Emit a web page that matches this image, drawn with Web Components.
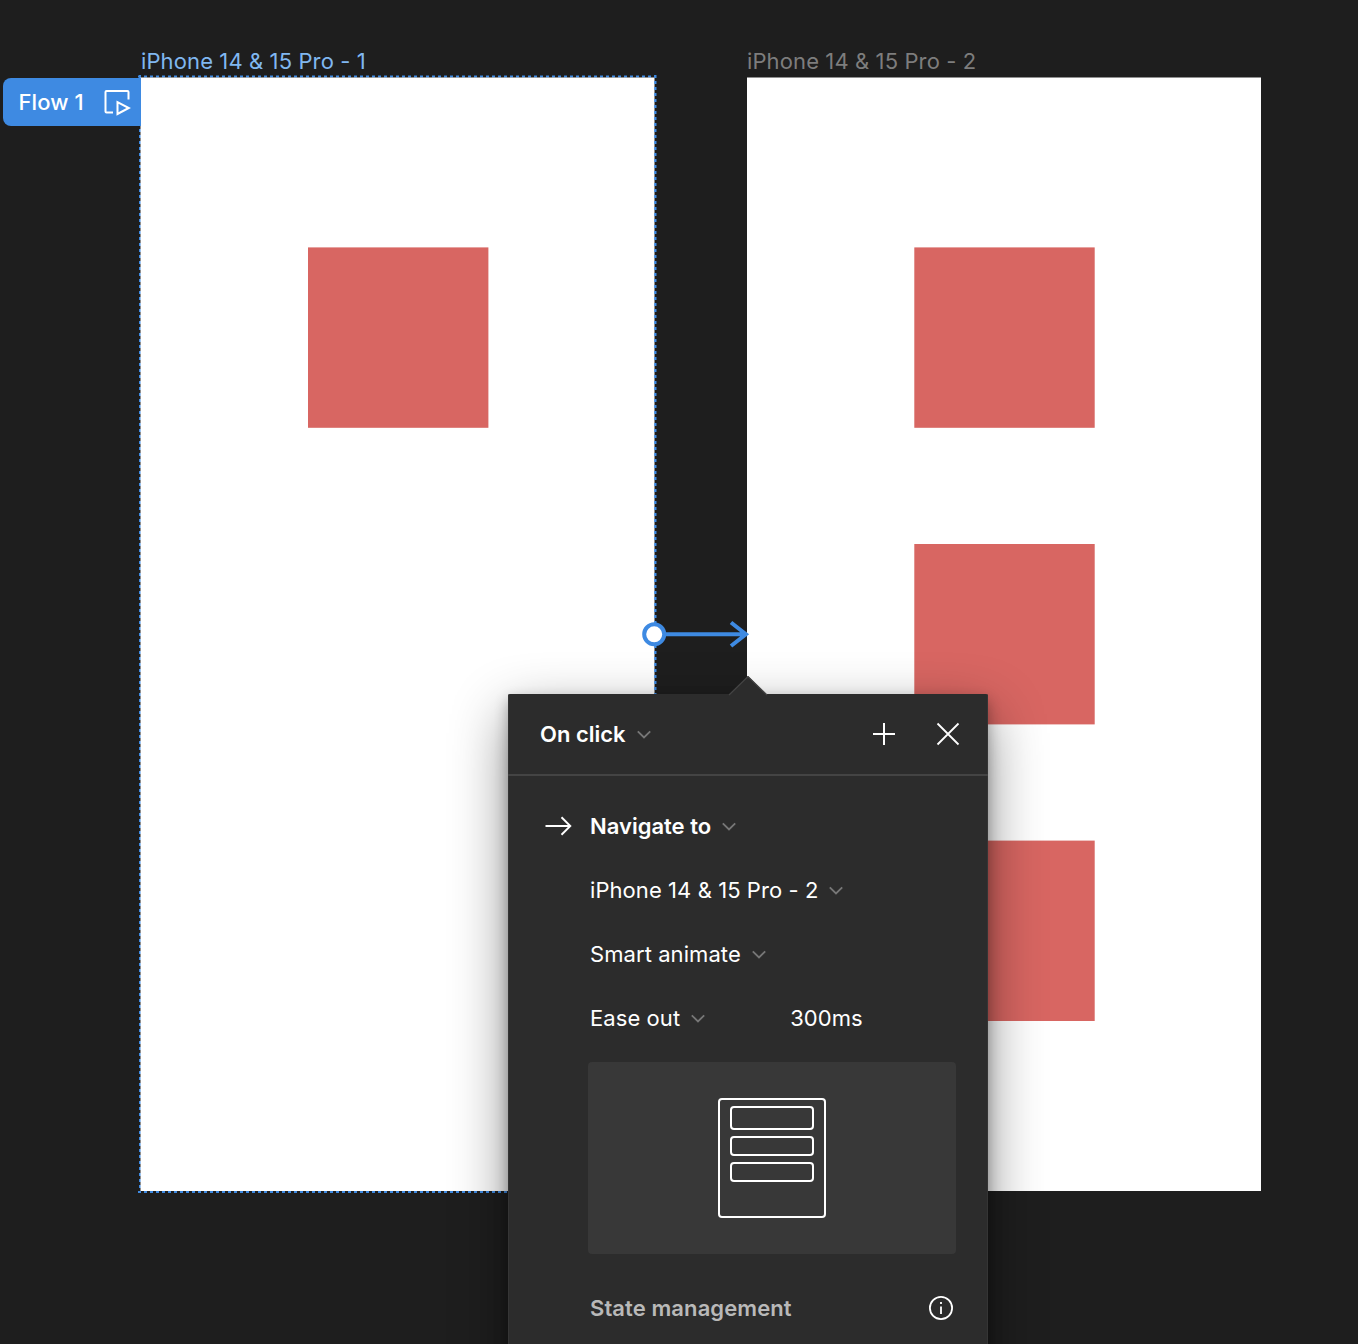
<!DOCTYPE html>
<html lang="en">
<head>
<meta charset="utf-8">
<title>Prototype canvas</title>
<style>
html,body{margin:0;height:100%;overflow:hidden;background:#1e1e1e}
body{font-family:Inter,"Liberation Sans",sans-serif}
</style>
</head>
<body>
<proto-canvas>
  <device-frame label="iPhone 14 &amp; 15 Pro - 1" selected style="left:141px">
    <red-square style="left:167px;top:170px;--x:0px"></red-square>
  </device-frame>
  <device-frame label="iPhone 14 &amp; 15 Pro - 2" style="left:747px">
    <red-square style="left:167px;top:170px"></red-square>
    <red-square style="left:167px;top:467px;--y:0px"></red-square>
    <red-square style="left:167px;top:763px;--y:.6px"></red-square>
  </device-frame>
  <flow-badge>Flow 1</flow-badge>
  <flow-connector></flow-connector>
  <interaction-panel></interaction-panel>
</proto-canvas>
<script>
const define = (name, markup, fill) => customElements.define(name, class extends HTMLElement {
  constructor() {
    super();
    this.attachShadow({mode: 'open'}).innerHTML = markup;
  }
  connectedCallback() { if (fill) fill(this, this.shadowRoot); }
});

define('proto-canvas', `<style>
:host{display:block;position:relative;width:1358px;height:1344px;overflow:hidden;background:#1e1e1e}
</style><slot></slot>`);

define('red-square', `<style>
:host{display:block;position:absolute;width:181px;height:181px}
svg{display:block}
rect{x:var(--x,.3px);y:var(--y,.4px)}
</style><svg width="181" height="181"><rect width="180.400" height="180.400" fill="#d86662"/></svg>`);

define('device-frame', `<style>
:host{display:block;position:absolute;top:77px;width:514px;height:1114px}
.label{position:absolute;left:0;top:-31px;font-size:22px;line-height:30px;letter-spacing:.11px;white-space:nowrap;color:#7d7d7d}
:host([selected]) .label{color:#80b7f0}
svg{position:absolute;left:0;top:0;overflow:visible}
.outline{display:none}
:host([selected]) .outline{display:block}
:host([selected]) .page{x:-.5px}
</style>
<div class="label"></div>
<svg width="514" height="1114"><g class="outline" fill="none" stroke="#3e8ae2" stroke-width="2" stroke-dasharray="3 3">
<path d="M-3 -.5H515M514.300 -2V1115.500M-3 1115H515M-1 -2V1115.500"/></g>
<rect class="page" y=".5" width="514" height="1113.500" fill="#fff"/>
<path class="outline" fill="none" stroke="#3e8ae2" stroke-width="2" stroke-dasharray="3 3" d="M514.300 -2V1115.500"/></svg>
<slot></slot>`, (el, root) => { root.querySelector('.label').textContent = el.getAttribute('label'); });

define('flow-badge', `<style>
:host{position:absolute;left:3px;top:78px;width:138px;height:48px;box-sizing:border-box;padding:0 10.5px 0 15.5px;display:flex;align-items:center;justify-content:space-between;border-radius:8px 0 0 8px;background:#3e8ae2;color:#fff;font-size:22px;font-weight:500;line-height:32px;letter-spacing:.11px}
svg{display:block}
</style><span><slot></slot></span>
<svg width="27" height="28" fill="none" stroke="#fff" stroke-width="2"><path d="M9 24.500H2.500Q1.500 24.500 1.500 23.500V4Q1.500 3 2.500 3H23.500Q24.500 3 24.500 4V11.500M13.500 14.200V26L24.800 20Z"/></svg>`);

define('flow-connector', `<style>
:host{display:block;position:absolute;left:640px;top:614px}
svg{display:block}
</style><svg width="112" height="40" fill="none" stroke="#3e8ae2" stroke-width="4"><path d="M25 20.300H106M91 8.500L105.900 20.300L91 32"/><circle cx="14.200" cy="20.300" r="10" fill="#fff"/></svg>`);

define('menu-label', `<style>
:host{display:inline-flex;align-items:center;gap:11px;font-size:22px;line-height:32px;letter-spacing:.07px;white-space:nowrap}
:host([strong]){font-weight:600;letter-spacing:0}
svg{display:block}
</style><span><slot></slot></span><svg width="14" height="9" fill="none" stroke="#777" stroke-width="1.800"><path d="M.8 1.300L7 7.500L13.200 1.300"/></svg>`);

define('panel-row', `<style>
:host{display:flex;align-items:center;height:64px;padding-left:82px}
:host([lead]){padding-left:36px}
</style><slot></slot>`);

define('motion-preview', `<style>
:host{display:flex;align-items:center;justify-content:center;height:192px;margin:12px 32px 0 80px;border-radius:4px;background:#383838}
.page{box-sizing:border-box;width:108px;height:120px;border:2px solid #fff;border-radius:4px;padding:6px 10px;display:flex;flex-direction:column;gap:6px}
.page i{box-sizing:border-box;height:20px;border:2px solid #fff;border-radius:4px}
.page i:first-child{height:24px}
</style><div class="page"><i></i><i></i><i></i></div>`);

define('interaction-panel', `<style>
:host{display:block;position:absolute;left:508px;top:694px;width:480px;height:700px;border-radius:2px;background:#2c2c2c;color:#fff;box-shadow:inset 1px 0 #353535,inset -1px 0 #353535,0 20px 56px rgba(0,0,0,.45),0 6px 14px rgba(0,0,0,.3)}
.tip{position:absolute;left:220px;top:-18px}
svg{display:block}
header{display:flex;align-items:center;box-sizing:border-box;height:82px;padding:0 28px 0 32px;border-bottom:2px solid #444}
header menu-label{margin-right:auto}
header svg+svg{margin-left:40px}
main{padding-top:18px}
.arrow{margin-right:18px}
.time{margin-left:85px;font-size:22px;letter-spacing:.07px}
footer{display:flex;align-items:center;justify-content:space-between;height:64px;margin-top:22px;padding:0 34px 0 82px;font-size:22px;font-weight:600;letter-spacing:.09px;color:#b9b9b9}
</style>
<svg class="tip" width="40" height="20"><path d="M1 19L20 0L39 19Z" fill="#2c2c2c"/><path d="M1 19L20 .5L39 19" fill="none" stroke="#444" stroke-width="1.200"/></svg>
<header><menu-label strong>On click</menu-label>
<svg width="24" height="24" fill="none" stroke="#fff" stroke-width="2"><path d="M1 12H23M12 1V23"/></svg>
<svg width="24" height="24" fill="none" stroke="#fff" stroke-width="1.800"><path d="M1.500 1.500L22.500 22.500M22.500 1.500L1.500 22.500"/></svg></header>
<main>
<panel-row lead><svg class="arrow" width="28" height="20" fill="none" stroke="#fff" stroke-width="1.900"><path d="M1.500 10H26.500M17.500 1.300L26.300 10L17.500 18.700"/></svg><menu-label strong>Navigate to</menu-label></panel-row>
<panel-row><menu-label>iPhone 14 &amp; 15 Pro - 2</menu-label></panel-row>
<panel-row><menu-label>Smart animate</menu-label></panel-row>
<panel-row><menu-label>Ease out</menu-label><span class="time">300ms</span></panel-row>
<motion-preview></motion-preview>
</main>
<footer><span>State management</span><svg width="26" height="26" fill="none" stroke="#fff" stroke-width="1.800"><circle cx="13" cy="13" r="11.100"/><path d="M13 11.500V19M13 7V9"/></svg></footer>`);
</script>
</body>
</html>
